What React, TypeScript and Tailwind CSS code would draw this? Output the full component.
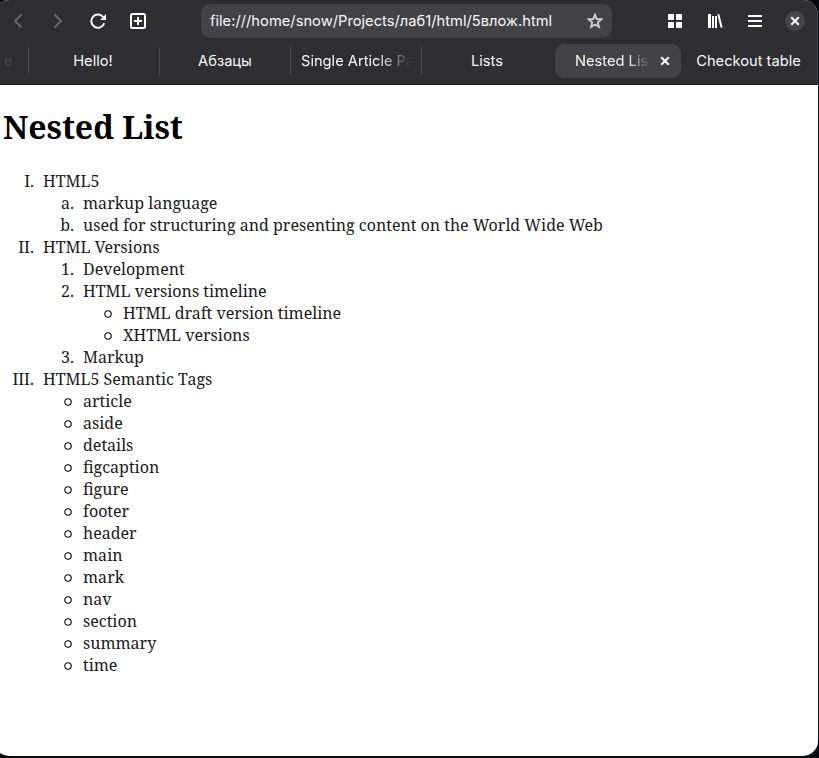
import type { ReactNode } from 'react';

type Item = { marker: string; text: string; level: 0 | 1 | 2 };

const items: Item[] = [
  { marker: 'I.', text: 'HTML5', level: 0 },
  { marker: 'a.', text: 'markup language', level: 1 },
  { marker: 'b.', text: 'used for structuring and presenting content on the World Wide Web', level: 1 },
  { marker: 'II.', text: 'HTML Versions', level: 0 },
  { marker: '1.', text: 'Development', level: 1 },
  { marker: '2.', text: 'HTML versions timeline', level: 1 },
  { marker: 'o', text: 'HTML draft version timeline', level: 2 },
  { marker: 'o', text: 'XHTML versions', level: 2 },
  { marker: '3.', text: 'Markup', level: 1 },
  { marker: 'III.', text: 'HTML5 Semantic Tags', level: 0 },
  ...['article', 'aside', 'details', 'figcaption', 'figure', 'footer', 'header', 'main', 'mark', 'nav', 'section', 'summary', 'time'].map(
    (text): Item => ({ marker: 'o', text, level: 1 }),
  ),
];

const markerWidth = ['w-[34px]', 'w-[74px]', 'w-[114px]'];

function Circle() {
  return (
    <svg viewBox="0 0 8 8" className="mt-[2px] mr-[2px] size-2" fill="none" stroke="black" strokeWidth="1.1">
      <circle cx="4" cy="4" r="3.2" />
    </svg>
  );
}

function Row({ marker, text, level }: Item) {
  return (
    <li className="flex h-[22px] items-center leading-[22px] whitespace-nowrap">
      <span className={`${markerWidth[level]} mr-[9px] flex shrink-0 justify-end`}>{marker === 'o' ? <Circle /> : marker}</span>
      <span>{text}</span>
    </li>
  );
}

function Icon({ children, className = '' }: { children: ReactNode; className?: string }) {
  return (
    <svg viewBox="0 0 16 16" className={`size-4 shrink-0 ${className}`} fill="none" stroke="currentColor" strokeWidth="2">
      {children}
    </svg>
  );
}

function Close() {
  return (
    <Icon>
      <path d="M5 5l6 6M11 5l-6 6" strokeWidth="2.2" strokeLinecap="square" />
    </Icon>
  );
}

const fade = '[mask-image:linear-gradient(to_right,black_70%,transparent_100%)]';

export default function App() {
  return (
    <div className="h-[758px] w-[819px] overflow-hidden bg-[#080a12]">
      <div className="ml-[-6px] h-[756px] w-[824px] overflow-hidden rounded-[15px] bg-white">
        <header className="h-[85px] border-r border-b border-r-[#414145] border-b-[#1b1020] bg-[#2e2e33] pl-[6px] font-[Inter,sans-serif] text-[14.67px] text-[#f7f7f7]">
          <div className="flex h-[42px] items-center pl-[10px]">
            <Icon className="text-[#68686c]"><path d="M11 2L5 8l6 6" strokeLinecap="round" /></Icon>
            <Icon className="ml-6 text-[#68686c]"><path d="M5 2l6 6-6 6" strokeLinecap="round" /></Icon>
            <Icon className="ml-6 text-white">
              <path d="M14.2 10.2A6.6 6.6 0 1 1 13.4 4.5" />
              <path d="M10 7h6V1z" fill="currentColor" stroke="none" />
            </Icon>
            <Icon className="ml-6 text-white">
              <rect x="1" y="1" width="14" height="14" rx="1.5" />
              <path d="M8 4v8M4 8h8" />
            </Icon>
            <div className="ml-[55px] flex h-[34px] w-[411px] items-center justify-between rounded-[9px] bg-[#434347] pr-[9px] pl-[9px]">
              <span className="tracking-[0.03px]">file:///home/snow/Projects/лаб1/html/5влож.html</span>
              <Icon className="text-[#d0d0d2]">
                <path d="M8 1.8l1.75 4.25 4.6.35-3.5 3 1.1 4.5L8 11.5l-3.95 2.4 1.1-4.5-3.5-3 4.6-.35z" strokeWidth="1.9" />
              </Icon>
            </div>
            <Icon className="ml-[55px] text-white">
              <g fill="currentColor" stroke="none">
                <rect x="1" y="1" width="6" height="6" rx=".7" />
                <rect x="9" y="1" width="6" height="6" rx=".7" />
                <rect x="1" y="9" width="6" height="6" rx=".7" />
                <rect x="9" y="9" width="6" height="6" rx=".7" />
              </g>
            </Icon>
            <Icon className="ml-6 text-white">
              <path d="M2.5 1v14" strokeWidth="3" />
              <path d="M6 3v12M9 3v12" strokeWidth="2" />
              <path d="M11.3 1.2l3.3 13.2" strokeWidth="2" />
            </Icon>
            <Icon className="ml-6 text-white"><path d="M1 3h14M1 8h14M1 13h14" /></Icon>
            <div className="ml-[22px] flex size-5 items-center justify-center rounded-full bg-[#47474b]"><Close /></div>
          </div>
          <nav className="flex h-[38px] items-center">
            <div className="h-7 w-[28px] pl-1 leading-[28px] text-[#48484d]">e</div>
            <div className="h-7 w-[131px] border-l border-[#4b4b50] pr-[2px] text-center leading-[28px]">Hello!</div>
            <div className="h-7 w-[131px] border-l border-[#4b4b50] text-center leading-[28px]">Абзацы</div>
            <div className="h-7 w-[131px] border-l border-[#4b4b50] pl-[10px] leading-[28px]">
              <div className={`w-[110px] overflow-hidden whitespace-nowrap ${fade}`}>Single Article Page</div>
            </div>
            <div className="h-7 w-[131px] border-l border-[#4b4b50] text-center leading-[28px]">Lists</div>
            <div className="ml-[3px] flex h-[34px] w-[126px] items-center rounded-[9px] bg-[#434347] pl-5">
              <div className={`w-[75px] overflow-hidden whitespace-nowrap ${fade}`}>Nested List</div>
              <div className="ml-[7px] flex"><Close /></div>
            </div>
            <div className="ml-[2px] w-[131px] text-center">Checkout table</div>
          </nav>
        </header>
        <main className="pl-[6px] font-['Noto_Serif','DejaVu_Serif_Condensed','DejaVu_Serif',serif] text-[16px] text-[#1a1a1a]">
          <h1 className="mt-[20px] ml-[3px] h-[44px] text-[32px] leading-[44px] font-bold whitespace-nowrap text-black">Nested List</h1>
          <ul className="mt-[21px]">
            {items.map((item) => <Row key={item.text} {...item} />)}
          </ul>
        </main>
      </div>
    </div>
  );
}
